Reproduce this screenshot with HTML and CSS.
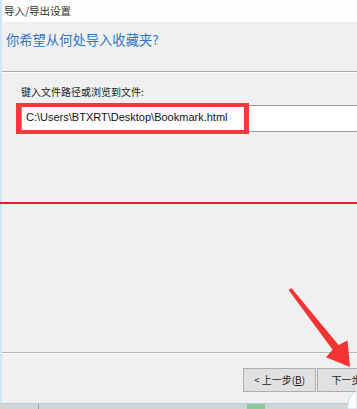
FILE: index.html
```html
<!DOCTYPE html>
<html lang="zh-CN">
<head>
<meta charset="utf-8">
<title>导入/导出设置</title>
<link rel="stylesheet" href="styles.css">
</head>
<body>
<div class="window">
  <div class="titlebar">导入/导出设置</div>
  <div class="header">
    <h1 class="heading">你希望从何处导入收藏夹?</h1>
  </div>
  <div class="divider"></div>
  <div class="content">
    <div class="label">键入文件路径或浏览到文件:</div>
    <div class="field-wrap">
      <div class="field">C:\Users\BTXRT\Desktop\Bookmark.html</div>
      <div class="mark-box"></div>
    </div>
    <div class="red-line"></div>
  </div>
  <div class="divider divider-footer"></div>
  <div class="footer">
    <div class="btn">&lt; 上一步(<u>B</u>)</div>
    <div class="btn">下一步(<u>N</u>)</div>
  </div>
</div>
<div class="taskbar">
  <div class="task-sep"></div>
  <div class="task-green"></div>
</div>
<svg class="overlay" width="357" height="409" viewBox="0 0 357 409" aria-hidden="true">
  <polygon fill="#f03434" points="288.6,289.9 291.4,287.9 338.6,345 347.6,340.6 350,367 326,357.2 332.6,349.8"/>
  <path d="M347 409 L349 399 Q352 392 357 391 L357 409 Z" fill="#ffffff" stroke="#b9d6ea" stroke-width="1"/>
</svg>
</body>
</html>
```

FILE: styles.css
```css
html, body {
  margin: 0;
  padding: 0;
}
body {
  width: 357px;
  height: 409px;
  overflow: hidden;
  position: relative;
  background: #f0f0f0;
  font-family: "Noto Sans CJK SC", "Liberation Sans", sans-serif;
  color: #222;
}
.window {
  display: flex;
  flex-direction: column;
  border-left: 2px solid #cfe6f6;
  border-bottom: 1px solid #a9d2ec;
  background: #f0f0f0;
  box-sizing: border-box;
  height: 404px;
}
.titlebar {
  height: 22px;
  flex-shrink: 0;
  background: #fdfdfb;
  font-size: 10.5px;
  line-height: 22px;
  padding-left: 2px;
  color: #333;
}
.header {
  height: 49px;
  flex-shrink: 0;
  padding-left: 4px;
  display: flex;
  align-items: flex-start;
}
.heading {
  margin: 8px 0 0 0;
  font-size: 13.3px;
  font-weight: normal;
  line-height: 20px;
  color: #2f76c2;
}
.divider {
  height: 1px;
  flex-shrink: 0;
  background: #a8a8a8;
  border-bottom: 1px solid #fbfbfb;
}
.content {
  flex: 1;
  min-height: 0;
  display: flex;
  flex-direction: column;
  padding-left: 21px;
  margin-left: -2px;
}
.label {
  margin-top: 13px;
  font-size: 10px;
  line-height: 12px;
  color: #222;
}
.field-wrap {
  position: relative;
  margin-top: 7px;
}
.field {
  height: 25px;
  border: 1px solid #9a9a9a;
  border-right: none;
  background: #fff;
  font-family: "Liberation Sans", sans-serif;
  font-size: 11px;
  line-height: 22px;
  padding-left: 4px;
  color: #111;
  white-space: nowrap;
}
.mark-box {
  position: absolute;
  left: -5px;
  top: -2px;
  width: 233px;
  height: 31px;
  box-sizing: border-box;
  border: 5px solid #f03a3e;
  border-top-width: 4px;
  border-bottom-width: 4px;
}
.red-line {
  height: 2px;
  background: #d8262a;
  margin-top: 70px;
  margin-left: -21px;
}
.divider-footer {
  background: #b4b4b4;
}
.footer {
  height: 49px;
  flex-shrink: 0;
  box-sizing: border-box;
  display: flex;
  justify-content: flex-start;
  gap: 1px;
  padding-left: 241px;
  padding-top: 14px;
  overflow: hidden;
}
.btn {
  flex-shrink: 0;
  width: 73px;
  height: 24px;
  box-sizing: border-box;
  background: #e1e1e1;
  border: 1px solid #adadad;
  font-size: 10px;
  line-height: 22px;
  text-align: center;
  color: #222;
}
.btn u {
  text-decoration: underline;
}
.taskbar {
  height: 5px;
  background: #d4d4d4;
  display: flex;
  position: relative;
}
.task-sep {
  width: 1px;
  height: 5px;
  background: #a0a0a0;
  margin-left: 38px;
}
.task-green {
  width: 18px;
  height: 5px;
  margin-left: 208px;
  background: #8fc79a;
}
.overlay {
  position: absolute;
  left: 0;
  top: 0;
  pointer-events: none;
}
```
